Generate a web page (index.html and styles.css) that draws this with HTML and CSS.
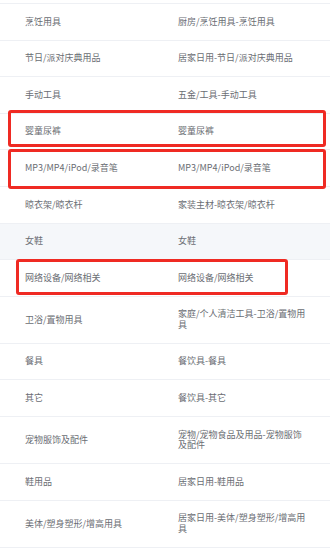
FILE: index.html
```html
<!DOCTYPE html>
<html>
<head>
<meta charset="utf-8">
<link rel="stylesheet" href="styles.css">
</head>
<body>
<div class="sheet">
  <div class="table">
    <div class="row"><div class="cell c1">烹饪用具</div><div class="cell c2">厨房/烹饪用具-烹饪用具</div></div>
    <div class="row"><div class="cell c1">节日/派对庆典用品</div><div class="cell c2">居家日用-节日/派对庆典用品</div></div>
    <div class="row"><div class="cell c1">手动工具</div><div class="cell c2">五金/工具-手动工具</div></div>
    <div class="row"><div class="cell c1">婴童尿裤</div><div class="cell c2">婴童尿裤</div></div>
    <div class="row"><div class="cell c1">MP3/MP4/iPod/录音笔</div><div class="cell c2">MP3/MP4/iPod/录音笔</div></div>
    <div class="row"><div class="cell c1">晾衣架/晾衣杆</div><div class="cell c2">家装主材-晾衣架/晾衣杆</div></div>
    <div class="row hover"><div class="cell c1">女鞋</div><div class="cell c2">女鞋</div></div>
    <div class="row"><div class="cell c1">网络设备/网络相关</div><div class="cell c2">网络设备/网络相关</div></div>
    <div class="row"><div class="cell c1">卫浴/置物用具</div><div class="cell c2">家庭/个人清洁工具-卫浴/置物用具</div></div>
    <div class="row"><div class="cell c1">餐具</div><div class="cell c2">餐饮具-餐具</div></div>
    <div class="row"><div class="cell c1">其它</div><div class="cell c2">餐饮具-其它</div></div>
    <div class="row"><div class="cell c1">宠物服饰及配件</div><div class="cell c2">宠物/宠物食品及用品-宠物服饰及配件</div></div>
    <div class="row"><div class="cell c1">鞋用品</div><div class="cell c2">居家日用-鞋用品</div></div>
    <div class="row"><div class="cell c1">美体/塑身塑形/增高用具</div><div class="cell c2">居家日用-美体/塑身塑形/增高用具</div></div>
  </div>
  <div class="mark mark-1"></div>
  <div class="mark mark-2"></div>
  <div class="mark mark-3"></div>
</div>
</body>
</html>
```

FILE: styles.css
```css
* { box-sizing: border-box; }
html, body {
  margin: 0;
  padding: 0;
  background: #ffffff;
}
body {
  font-family: "Noto Sans CJK SC", "Microsoft YaHei", "Noto Sans", sans-serif;
  font-size: 9px;
  color: #6a6d73;
  overflow: hidden;
}
.sheet {
  position: relative;
  width: 330px;
  padding-top: 3px;
}
.table {
  border-top: 1px solid #eef0f4;
}
.row {
  display: grid;
  grid-template-columns: 166px 1fr;
  align-items: center;
  border-bottom: 1px solid #eef0f4;
}
.row.hover {
  background: #f5f7fa;
}
.cell {
  padding: 12.55px 0;
  line-height: 10.5px;
}
.c1 {
  padding-left: 25px;
  padding-right: 10px;
}
.c2 {
  padding-left: 12px;
  padding-right: 23px;
}
.mark {
  position: absolute;
  border: 3px solid #ef2a23;
  border-radius: 3px;
}
.mark-1 { left: 8px; top: 110px; width: 318px; height: 37px; }
.mark-2 { left: 8px; top: 149px; width: 318px; height: 40px; }
.mark-3 { left: 16px; top: 259px; width: 272px; height: 36px; }
```
